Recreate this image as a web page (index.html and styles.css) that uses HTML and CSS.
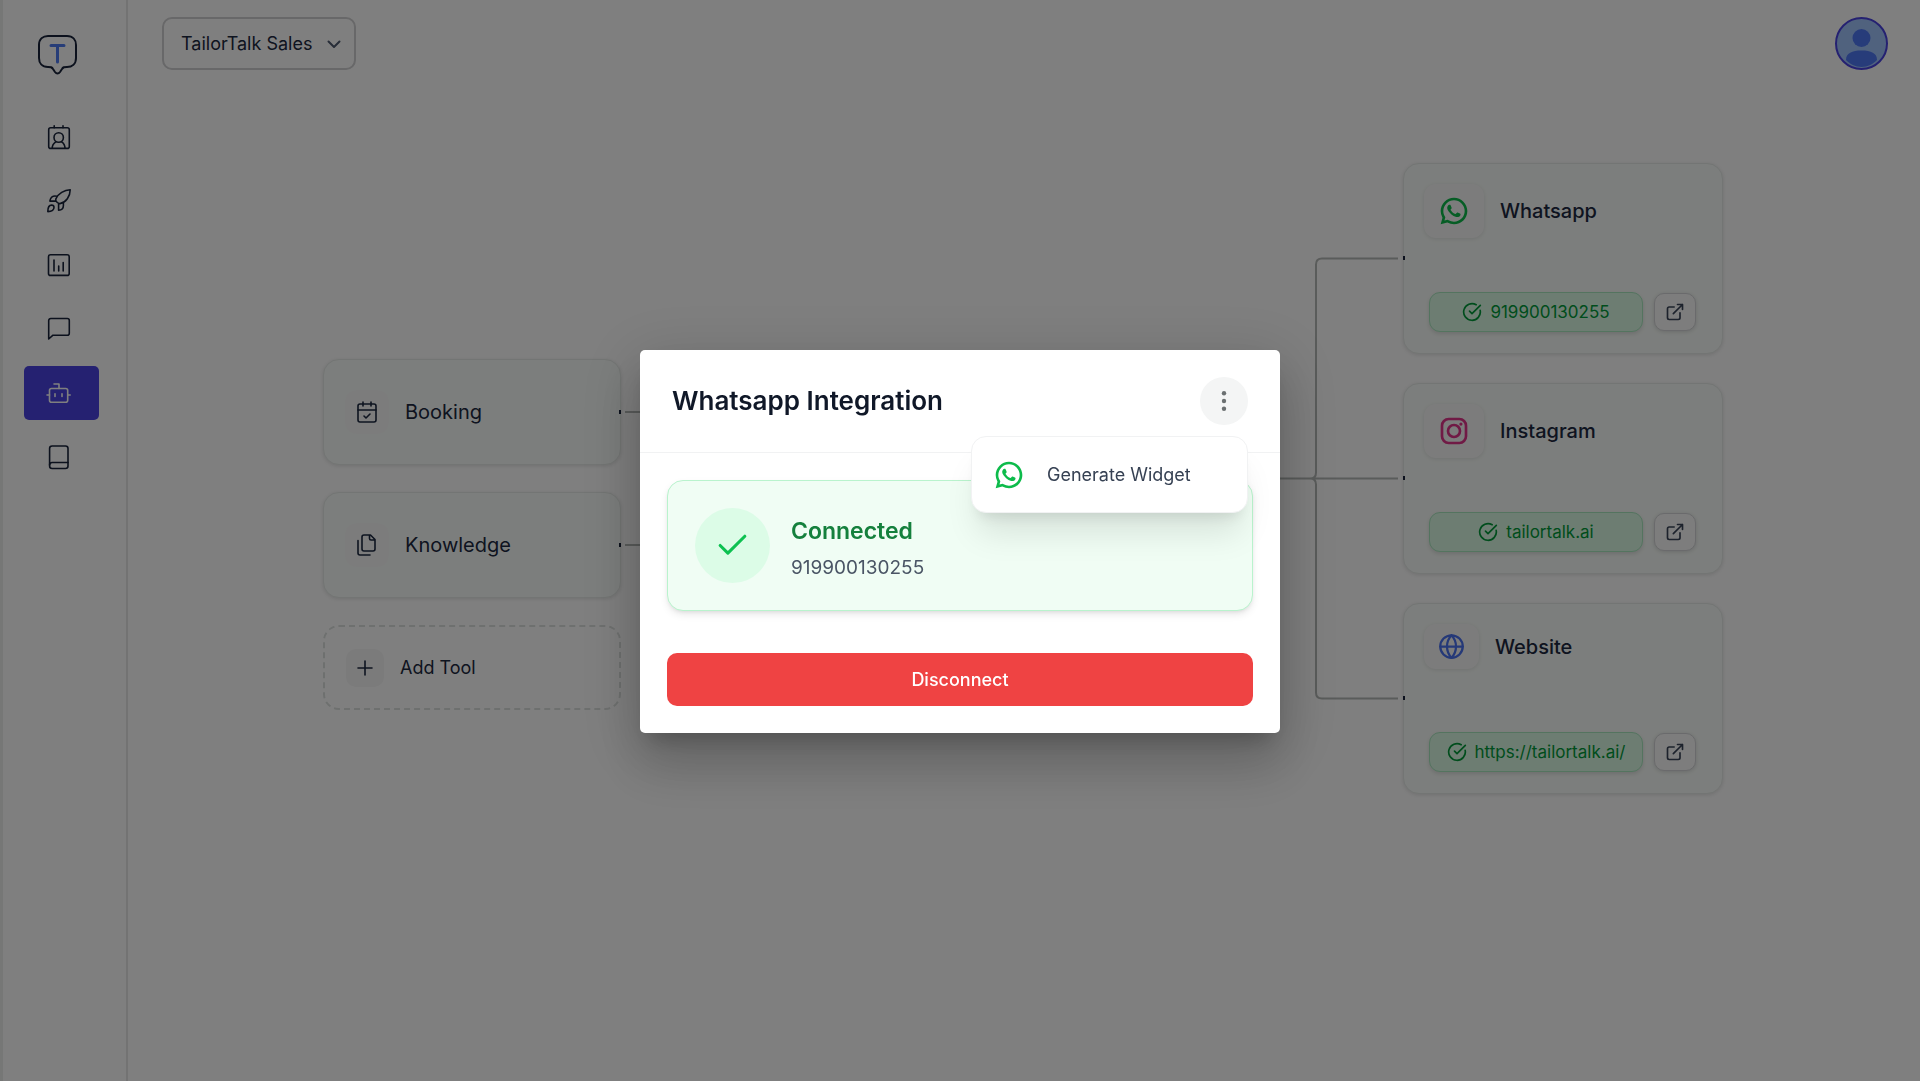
FILE: index.html
```html
<!DOCTYPE html>
<html lang="en">
<head>
<meta charset="utf-8">
<meta name="viewport" content="width=device-width, initial-scale=1">
<title>TailorTalk – Integrations</title>
<link rel="stylesheet" href="styles.css">
</head>
<body>
<svg class="sprite" aria-hidden="true">
  <symbol id="whatsapp" viewBox="0 0 24 24"><path fill="currentColor" d="M7.254 18.494l.724.423A7.95 7.95 0 0 0 12.001 20a8 8 0 1 0-8-8c0 1.436.377 2.813 1.084 4.024l.422.724-.653 2.401 2.4-.655ZM2.005 22l1.352-4.968A9.95 9.95 0 0 1 2.001 12c0-5.523 4.477-10 10-10s10 4.477 10 10-4.477 10-10 10a9.95 9.95 0 0 1-5.03-1.355L2.005 22ZM8.392 7.308c.134-.01.268-.01.403-.004.054.004.108.01.162.016.159.018.334.115.393.249.298.676.588 1.357.868 2.04.062.152.025.347-.093.537-.06.097-.154.233-.263.372-.113.145-.356.411-.356.411s-.099.118-.061.265c.014.056.06.137.102.205l.059.095c.256.427.6.86 1.02 1.268.12.116.237.235.363.346a5.9 5.9 0 0 0 1.57 1l.005.002c.085.037.128.057.252.11.062.026.126.049.191.066.024.006.048.01.073.011.162.01.255-.094.295-.142.724-.876.79-.933.795-.933v.002c.095-.1.244-.135.378-.127.06.004.121.015.177.04.531.243 1.401.622 1.401.622l.581.261c.098.047.187.158.191.265.003.067.01.175-.014.373-.031.259-.11.57-.188.733-.055.115-.126.216-.209.302a2.6 2.6 0 0 1-.331.288l-.125.09c-.139.088-.217.132-.383.22a2 2 0 0 1-.833.231c-.185.01-.37.023-.556.013-.008 0-.568-.086-.568-.086a9.45 9.45 0 0 1-3.84-2.046c-.226-.199-.435-.414-.649-.626-.889-.886-1.562-1.84-1.97-2.742A3.47 3.47 0 0 1 6.9 9.644a2.73 2.73 0 0 1 .565-1.67c.073-.093.142-.191.261-.304.127-.12.207-.183.294-.227a.9.9 0 0 1 .372-.135Z"/></symbol>
  <symbol id="verified" viewBox="0 0 24 24"><path d="M21.8 10A10 10 0 1 1 17 3.3"/><path d="m9 11 3 3L22 4"/></symbol>
  <symbol id="external" viewBox="0 0 24 24"><path d="M15 3h6v6M10 14 21 3M18 13v6a2 2 0 0 1-2 2H5a2 2 0 0 1-2-2V8a2 2 0 0 1 2-2h6"/></symbol>
</svg>

<div class="app">
  <aside class="sidebar">
    <a class="logo" href="#" aria-label="TailorTalk home">
      <svg viewBox="0 0 41 42" width="41" height="42" fill="none" stroke-linecap="round" stroke-linejoin="round">
        <path stroke="#18233a" stroke-width="2" d="M11 2h19c6 0 9 4 9 9v13c0 6-4 9-9 9-3 0-4 0-5 2l-2 3c-1.500 2-3.500 2-5 0l-2-3c-1-2-2-2-5-2-6 0-9-4-9-9V11c0-6 4-9 9-9Z"/>
        <path stroke="#4f7af0" stroke-width="3" d="M14 11.500h13M20.500 11.500V28"/>
      </svg>
    </a>
    <nav class="nav" aria-label="Main">
      <a class="nav-item" href="#" aria-label="Contacts"><svg viewBox="0 0 28 28"><rect x="3.700" y="4.800" width="20.600" height="20.600" rx="2"/><path d="M9.200 2.800v2M18 2.800v2M7.200 25.200c0-2.600 1.400-5 3.600-6.400M20 25.200c0-2.600-1.200-5-3.400-6.400"/><circle cx="13.700" cy="14.500" r="4.700"/></svg></a>
      <a class="nav-item" href="#" aria-label="Campaigns"><svg viewBox="0 0 28 28"><path d="M25.200 2.800C19.500 3 13 6.500 10.800 12c-.5 2 1.700 4.600 4.200 4.600C21 15.500 25.200 9.500 25.200 2.800ZM12.200 9.300c-3-.8-5.500.2-6.500 2.200-.5 1-.7 1.800-.8 2.600h5.800M13.600 17v6.200c3.200-.2 4.800-2.400 4.800-4.800v-3.200M2.800 24.600c0-3 .4-6.500 3.800-6.500 1.500 0 2.400.8 2.400 2.200 0 3-2.600 4.300-6.200 4.300Z"/></svg></a>
      <a class="nav-item" href="#" aria-label="Analytics"><svg viewBox="0 0 28 28"><rect x="3.500" y="3.700" width="20.700" height="20.700" rx="2"/><path d="M9 9v11M13.700 15v5M18.200 11.500V20"/></svg></a>
      <a class="nav-item" href="#" aria-label="Chats"><svg viewBox="0 0 28 28"><path d="M3.700 24V5.500a2 2 0 0 1 2-2h16.600a2 2 0 0 1 2 2v12.700a2 2 0 0 1-2 2H8L3.700 24Z"/></svg></a>
      <a class="nav-item active" href="#" aria-label="Agents" aria-current="page"><svg viewBox="0 0 28 28"><rect x="4.500" y="9.500" width="18.200" height="13.800" rx="2"/><path d="M9 5h5v4.500M2 16h2.500M22.700 16h2.500M10 14.800v2.600M17 14.800v2.600"/></svg></a>
      <a class="nav-item" href="#" aria-label="Docs"><svg viewBox="0 0 28 28"><rect x="4.600" y="3" width="18.400" height="22.500" rx="2.500"/><path d="M4.600 22c0-1.500 1-2.500 2.500-2.500H23"/></svg></a>
    </nav>
  </aside>

  <main class="main">
    <header class="topbar">
      <div class="picker">
        <select aria-label="Agent"><option>TailorTalk Sales</option></select>
        <svg class="chevron" viewBox="0 0 16 16" width="16" height="16"><path d="m2.500 5.500 5.500 5.500 5.500-5.500"/></svg>
      </div>
      <button class="avatar" type="button" aria-label="Account">
        <svg viewBox="0 0 49 49" width="49" height="49"><circle cx="24.500" cy="19" r="9"/><path d="M9 41c0-7 6-9.500 15.500-9.500S40 34 40 41c-4 4-9 7-15.500 7S13 45 9 41Z"/></svg>
      </button>
    </header>

    <div class="diagram">
      <section class="tools">
        <article class="card tool">
          <span class="tile"><svg class="line-icon" viewBox="0 0 24 24" width="24" height="24"><path d="M8 2v4M16 2v4M3 10h18M9 16l2 2 4-4"/><rect x="3" y="4" width="18" height="18" rx="2"/></svg></span>
          <h2>Booking</h2>
        </article>
        <article class="card tool">
          <span class="tile"><svg class="line-icon" viewBox="0 0 24 24" width="24" height="24"><path d="M15.500 2H9a2 2 0 0 0-2 2v12a2 2 0 0 0 2 2h9a2 2 0 0 0 2-2V6.500ZM14.500 2v3.500a1.500 1.500 0 0 0 1.500 1.500h4M3 7.500V20a2 2 0 0 0 2 2h10"/></svg></span>
          <h2>Knowledge</h2>
        </article>
        <button class="add-tool" type="button">
          <span class="tile small"><svg class="line-icon" viewBox="0 0 24 24" width="24" height="24"><path d="M5 12h14M12 5v14"/></svg></span>
          Add Tool
        </button>
      </section>

      <svg class="edges" viewBox="0 0 782 632" width="782" height="632" aria-hidden="true">
        <path d="M4 249H60M4 382H60M390 315.500H777M390 315.500H689Q695 315.500 695 309.500V101.500Q695 95.500 701 95.500H777M689 315.500Q695 315.500 695 321.500V529.500Q695 535.500 701 535.500H777"/>
        <g class="ports"><rect x="-2" y="247" width="2" height="4"/><rect x="-2" y="380" width="2" height="4"/><rect x="782" y="93" width="2" height="4"/><rect x="782" y="313" width="2" height="4"/><rect x="782" y="533" width="2" height="4"/></g>
      </svg>

      <section class="channels">
        <article class="card channel">
          <div class="channel-head"><span class="tile wide green"><svg width="32" height="32"><use href="#whatsapp"/></svg></span><h2>Whatsapp</h2></div>
          <div class="channel-foot">
            <button class="pill" type="button"><svg class="line-icon" width="20" height="20"><use href="#verified"/></svg>919900130255</button>
            <a class="open" href="#" aria-label="Open Whatsapp"><svg class="line-icon" width="20" height="20"><use href="#external"/></svg></a>
          </div>
        </article>
        <article class="card channel">
          <div class="channel-head"><span class="tile wide pink"><svg class="line-icon bold" viewBox="0 0 24 24" width="32" height="32"><rect x="3" y="3" width="18" height="18" rx="5"/><circle cx="12" cy="12" r="4.500"/><circle cx="17.200" cy="6.800" r="1.200" fill="currentColor" stroke="none"/></svg></span><h2>Instagram</h2></div>
          <div class="channel-foot">
            <button class="pill" type="button"><svg class="line-icon" width="20" height="20"><use href="#verified"/></svg>tailortalk.ai</button>
            <a class="open" href="#" aria-label="Open Instagram"><svg class="line-icon" width="20" height="20"><use href="#external"/></svg></a>
          </div>
        </article>
        <article class="card channel">
          <div class="channel-head"><span class="tile wide compact blue"><svg class="line-icon bold" viewBox="0 0 24 24" width="27" height="27"><circle cx="12" cy="12" r="10"/><path d="M12 2a14.500 14.500 0 0 0 0 20 14.500 14.500 0 0 0 0-20M2 12h20"/></svg></span><h2>Website</h2></div>
          <div class="channel-foot">
            <button class="pill" type="button"><svg class="line-icon" width="20" height="20"><use href="#verified"/></svg>https://tailortalk.ai/</button>
            <a class="open" href="#" aria-label="Open website"><svg class="line-icon" width="20" height="20"><use href="#external"/></svg></a>
          </div>
        </article>
      </section>
    </div>
  </main>
</div>

<div class="overlay">
  <div class="dialog" role="dialog" aria-modal="true" aria-labelledby="dialog-title">
    <header class="dialog-head">
      <h1 id="dialog-title">Whatsapp Integration</h1>
      <div class="menu-anchor">
        <button class="more" type="button" aria-label="More options" aria-expanded="true"><svg viewBox="0 0 24 24" width="24" height="24"><circle cx="12" cy="4.200" r="2.200"/><circle cx="12" cy="12" r="2.200"/><circle cx="12" cy="19.800" r="2.200"/></svg></button>
        <div class="menu" role="menu">
          <button class="menu-item" type="button" role="menuitem"><svg width="32" height="32"><use href="#whatsapp"/></svg>Generate Widget</button>
        </div>
      </div>
    </header>
    <div class="dialog-body">
      <div class="status">
        <span class="status-icon"><svg viewBox="0 0 24 24" width="37" height="37"><path d="M20 6 9 17l-5-5"/></svg></span>
        <div class="status-text"><h2>Connected</h2><p>919900130255</p></div>
      </div>
      <button class="disconnect" type="button">Disconnect</button>
    </div>
  </div>
</div>
</body>
</html>
```
FILE: styles.css
```css
* { box-sizing: border-box; }

body {
  margin: 0;
  background: #fff;
  color: #1c2840;
  font-family: Inter, "Liberation Sans", sans-serif;
  font-size: 19px;
  line-height: 28px;
}

h1, h2, p { margin: 0; }
button, select { font: inherit; color: inherit; }
button { cursor: pointer; }
svg { display: block; flex: none; }
.sprite { position: absolute; width: 0; height: 0; }

.line-icon {
  fill: none;
  stroke: currentColor;
  stroke-width: 1.6;
  stroke-linecap: round;
  stroke-linejoin: round;
}
.line-icon.bold { stroke-width: 2; }

.app { display: flex; min-height: 100vh; }

/* Sidebar */
.sidebar {
  flex: none;
  width: 128px;
  padding: 34px 26px 0 21px;
  border-left: 3px solid #eceeed;
  border-right: 2px solid #e6e6e6;
}
.logo { display: block; margin: 0 0 34px 13px; }
.nav { display: flex; flex-direction: column; gap: 10px; }
.nav-item {
  display: flex;
  align-items: center;
  width: 75px;
  height: 54px;
  padding-left: 21px;
  border-radius: 5px;
  color: #18233a;
}
.nav-item svg {
  width: 28px;
  height: 28px;
  fill: none;
  stroke: currentColor;
  stroke-width: 1.6;
  stroke-linecap: round;
  stroke-linejoin: round;
}
.nav-item.active { background: #4b43e2; color: #fff; }

/* Top bar */
.main { flex: 1; min-width: 0; }
.topbar {
  display: flex;
  justify-content: space-between;
  align-items: center;
  padding: 17px 32px 0 34px;
}
.picker { display: grid; align-items: center; }
.picker > * { grid-area: 1 / 1; }
.picker select {
  appearance: none;
  width: 194px;
  height: 53px;
  padding: 0 40px 0 17px;
  border: 2px solid #d0d0d2;
  border-radius: 10px;
  background: #fff;
  font-size: 18px;
}
.chevron {
  justify-self: end;
  margin-right: 14px;
  fill: none;
  stroke: #4f5b70;
  stroke-width: 2;
  stroke-linecap: round;
  stroke-linejoin: round;
  pointer-events: none;
}
.avatar {
  width: 53px;
  height: 53px;
  padding: 0;
  border: 2px solid #4b43e2;
  border-radius: 50%;
  background: #a0c4fd;
  overflow: hidden;
}
.avatar svg { fill: #4e78f5; }

/* Diagram */
.diagram {
  display: flex;
  justify-content: center;
  padding: 93px 2px 48px 0;
}
.edges {
  position: relative;
  z-index: 1;
  overflow: visible;
  fill: none;
  stroke: #b4b8b6;
  stroke-width: 2;
  pointer-events: none;
}
.edges .ports { fill: #18233a; stroke: none; }

.card {
  border: 1px solid #e6ebe8;
  border-radius: 16px;
  background: #f9fdfa;
  box-shadow: 0 1px 4px rgba(0, 0, 0, .12);
}
.card h2 { font-size: 20px; font-weight: 400; }

.tools {
  display: flex;
  flex-direction: column;
  gap: 27px;
  width: 298px;
  padding-top: 196px;
}
.tool {
  display: flex;
  align-items: center;
  gap: 16px;
  height: 106px;
  padding: 0 21px;
}
.tile {
  flex: none;
  padding: 10px;
  border-radius: 12px;
  background: #f9f9f9;
}
.tile.small { padding: 7px; border-radius: 10px; background: #f6f6f6; }
.add-tool {
  display: flex;
  align-items: center;
  gap: 16px;
  height: 85px;
  padding: 0 21px;
  border: 2px dashed #dde1df;
  border-radius: 16px;
  background: none;
  font-size: 18px;
}

.channels { display: flex; flex-direction: column; gap: 29px; width: 320px; }
.channel {
  display: flex;
  flex-direction: column;
  justify-content: space-between;
  height: 191px;
  padding: 20px 26px 21px 20px;
}
.channel-head { display: flex; align-items: center; gap: 16px; }
.channel h2 { font-weight: 500; }
.tile.wide {
  padding: 11px 14px;
  box-shadow: 0 1px 4px rgba(0, 0, 0, .1);
}
.tile.compact { padding: 9px 14px; }
.green { color: #0dbb4b; }
.pink { color: #e0348a; }
.blue { color: #4a72f0; }
.channel-foot {
  display: flex;
  align-items: center;
  gap: 11px;
  padding-left: 5px;
}
.pill {
  display: flex;
  flex: 1;
  justify-content: center;
  align-items: center;
  gap: 8px;
  height: 40px;
  padding: 0;
  border: 1px solid #a9e8bf;
  border-radius: 11px;
  background: #dafae5;
  box-shadow: 0 2px 4px rgba(0, 0, 0, .12);
  color: #009a38;
  font-size: 17px;
}
.pill .line-icon { stroke-width: 2; }
.open {
  padding: 8px 10px;
  border: 1px solid #d4d5d8;
  border-radius: 10px;
  background: #fbfbfb;
  box-shadow: 0 1px 4px rgba(0, 0, 0, .15);
  color: #3a4558;
}
.open .line-icon { stroke-width: 2; }

/* Dialog */
.overlay {
  position: fixed;
  inset: 0;
  z-index: 10;
  display: flex;
  justify-content: center;
  align-items: center;
  padding-top: 2px;
  background: rgba(0, 0, 0, .5);
}
.dialog {
  width: 640px;
  border-radius: 5px;
  background: #fff;
  box-shadow:
    0 15px 20px -9px rgba(0, 0, 0, .2),
    0 32px 51px 4px rgba(0, 0, 0, .14),
    0 12px 61px 11px rgba(0, 0, 0, .12);
}
.dialog-head {
  display: flex;
  justify-content: space-between;
  align-items: center;
  padding: 27px 32px;
  border-bottom: 1px solid #f1f2f3;
}
.dialog-head h1 {
  color: #101828;
  font-size: 26px;
  line-height: 36px;
  font-weight: 600;
}
.menu-anchor { position: relative; }
.more {
  display: grid;
  place-items: center;
  width: 48px;
  height: 48px;
  padding: 0;
  border: 0;
  border-radius: 50%;
  background: #f4f5f5;
}
.more svg { fill: #6b7071; }
.menu {
  position: absolute;
  top: 59px;
  right: 0;
  width: 277px;
  padding: 5px 0;
  border: 1px solid #f1f2f3;
  border-radius: 15px;
  background: #fff;
  box-shadow: 0 27px 33px -7px rgba(0, 0, 0, .1), 0 11px 13px -8px rgba(0, 0, 0, .1);
}
.menu-item {
  display: flex;
  align-items: center;
  gap: 22px;
  width: 100%;
  height: 65px;
  padding: 0 21px;
  border: 0;
  background: none;
  color: #364153;
  font-size: 18px;
}
.menu-item svg { color: #0dbb4b; }

.dialog-body {
  display: flex;
  flex-direction: column;
  gap: 42px;
  padding: 27px;
}
.status {
  display: flex;
  align-items: center;
  gap: 21px;
  padding: 27px;
  border: 1px solid #b9f3cd;
  border-radius: 16px;
  background: #f0fdf4;
  box-shadow: 0 4px 8px -1px rgba(0, 0, 0, .1), 0 2px 4px -2px rgba(0, 0, 0, .1);
}
.status-icon {
  display: grid;
  place-items: center;
  width: 75px;
  height: 75px;
  border-radius: 50%;
  background: #dcfce7;
}
.status-icon svg {
  fill: none;
  stroke: #0dc151;
  stroke-width: 2;
  stroke-linecap: round;
  stroke-linejoin: round;
}
.status-text { display: flex; flex-direction: column; gap: 5px; padding-top: 3px; }
.status-text h2 {
  color: #15803d;
  font-size: 23px;
  line-height: 36px;
  font-weight: 600;
}
.status-text p { color: #4a5565; }
.disconnect {
  height: 53px;
  border: 0;
  border-radius: 10px;
  background: #ef4343;
  color: #fff;
  font-size: 18px;
  font-weight: 500;
}
```
